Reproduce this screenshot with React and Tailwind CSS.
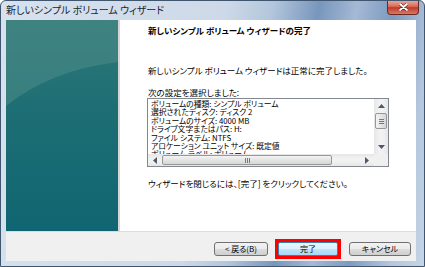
import React from "react";

function Tri({ dir }) {
  const pts = {
    up: "0,4 3.5,0 7,4",
    down: "0,0 3.5,4 7,0",
    left: "4,0 0,3.5 4,7",
    right: "0,0 4,3.5 0,7",
  }[dir];
  const vert = dir === "up" || dir === "down";
  return (
    <svg width={vert ? 7 : 4} height={vert ? 4 : 7} viewBox={vert ? "0 0 7 4" : "0 0 4 7"}>
      <polygon points={pts} fill="#4e5a6c" />
    </svg>
  );
}

const lines = [
  "ボリュームの種類: シンプル ボリューム",
  "選択されたディスク: ディスク 2",
  "ボリュームのサイズ: 4000 MB",
  "ドライブ文字またはパス: H:",
  "ファイル システム: NTFS",
  "アロケーション ユニット サイズ: 既定値",
  "ボリューム ラベル: ボリューム",
];

export default function App() {
  return (
    <div className="w-[425px] h-[267px] overflow-hidden flex flex-col rounded-t-[6px] border border-[#40566f] font-['Noto_Sans_CJK_JP',sans-serif] [font-feature-settings:'palt'] text-black bg-[linear-gradient(100deg,#d7e2ee_0%,#cdd9e8_48%,#b3c6dc_58%,#7896bd_68%,#a4b9d4_76%,#7d9ac1_84%,#b4c7de_93%,#c6d5e6_100%)]">
      {/* title bar */}
      <div className="h-[19px] flex items-start shrink-0">
        <div className="flex-1 pl-[5px] pt-[3px] text-[10px] leading-[12px] text-[#1b2430] whitespace-nowrap">
          新しいシンプル ボリューム ウィザード
        </div>
        <div className="mr-[5px] w-[32px] h-[15px] -mt-[1px] rounded-b-[4px] border border-t-0 border-[#6a2a22] bg-[linear-gradient(#eab0a2_0%,#d86e5c_45%,#c23a2a_55%,#d87a66_100%)] flex items-center justify-center">
          <svg width="9" height="8" viewBox="0 0 9 8">
            <path d="M1 1 L8 7 M8 1 L1 7" stroke="#5a2a24" strokeWidth="3" strokeLinecap="round" />
            <path d="M1 1 L8 7 M8 1 L1 7" stroke="#ffffff" strokeWidth="1.8" strokeLinecap="round" />
          </svg>
        </div>
      </div>

      {/* client */}
      <div className="ml-[5px] mr-[8px] h-[241px] flex flex-col shrink-0 bg-white">
        <div className="h-[211px] flex">
          <div className="w-[112px] relative overflow-hidden bg-[linear-gradient(#2f7878_0%,#1e6f74_40%,#0f6571_100%)]">
            <svg className="absolute inset-0" width="112" height="211" viewBox="0 0 112 211">
              <path d="M0 0 H112 V42 Q45 50 0 86 Z" fill="#4a8a87" opacity="0.6" />
            </svg>
          </div>
          <div className="w-[2px] bg-[#d6d6d6]" />
          <div className="flex-1 pl-[28px] flex flex-col">
            <div className="mt-[4px] text-[8.5px] leading-[12px] font-bold whitespace-nowrap">
              新しいシンプル ボリューム ウィザードの完了
            </div>
            <div className="mt-[28px] text-[8.5px] leading-[12px] whitespace-nowrap">
              新しいシンプル ボリューム ウィザードは正常に完了しました。
            </div>
            <div className="mt-[10px] text-[8.5px] leading-[12px] whitespace-nowrap">
              次の設定を選択しました:
            </div>
            <div className="-ml-[1px] w-[242px] h-[69px] border border-[#828790] bg-white grid grid-cols-[1fr_14px] grid-rows-[1fr_12px]">
              <div className="overflow-hidden pl-[3px] pt-[1px]">
                {lines.map((l) => (
                  <div key={l} className="text-[7.8px] leading-[8.4px] h-[8.4px] whitespace-nowrap">
                    {l}
                  </div>
                ))}
              </div>
              <div className="flex flex-col bg-[linear-gradient(to_right,#e6e6e6,#f2f2f2_40%,#f2f2f2_60%,#e6e6e6)]">
                <div className="h-[14px] flex items-center justify-center">
                  <Tri dir="up" />
                </div>
                <div className="h-[16px] mx-[1px] rounded-[2px] border border-[#979797] bg-[linear-gradient(to_right,#f4f4f4,#e4e4e4_50%,#d6d6d6)] flex flex-col items-center justify-center gap-[1px]">
                  <div className="w-[5px] h-[1px] bg-[#7a7a7a]" />
                  <div className="w-[5px] h-[1px] bg-[#7a7a7a]" />
                  <div className="w-[5px] h-[1px] bg-[#7a7a7a]" />
                </div>
                <div className="flex-1" />
                <div className="h-[14px] flex items-center justify-center">
                  <Tri dir="down" />
                </div>
              </div>
              <div className="flex bg-[linear-gradient(#e6e6e6,#f2f2f2_40%,#f2f2f2_60%,#e6e6e6)]">
                <div className="w-[14px] flex items-center justify-center">
                  <Tri dir="left" />
                </div>
                <div className="w-[170px] my-[1px] rounded-[2px] border border-[#979797] bg-[linear-gradient(#f4f4f4,#e4e4e4_50%,#d6d6d6)] flex items-center justify-center gap-[1px]">
                  <div className="w-[1px] h-[5px] bg-[#7a7a7a]" />
                  <div className="w-[1px] h-[5px] bg-[#7a7a7a]" />
                  <div className="w-[1px] h-[5px] bg-[#7a7a7a]" />
                </div>
                <div className="flex-1" />
                <div className="w-[14px] flex items-center justify-center">
                  <Tri dir="right" />
                </div>
              </div>
              <div className="bg-[#f0f0f0]" />
            </div>
            <div className="mt-[10px] text-[8.5px] leading-[12px] whitespace-nowrap">
              ウィザードを閉じるには、[完了] をクリックしてください。
            </div>
          </div>
        </div>

        <div className="h-[30px] border-t border-[#dcdcdc] bg-[#f0f0f0] flex items-center justify-end pt-[4px] pr-[5px]">
          <div className="w-[54px] h-[14px] rounded-[3px] border border-[#707070] bg-[linear-gradient(#f2f2f2_0%,#ebebeb_50%,#dddddd_50%,#cfcfcf_100%)] flex items-center justify-center text-[8px] leading-none whitespace-nowrap">
            &lt; 戻る(B)
          </div>
          <div className="ml-[7px] border-[3px] border-[#ff0000] bg-[#ff0000]">
            <div className="w-[60px] h-[14px] rounded-[2px] border border-[#3c7fb1] bg-[linear-gradient(#eaf6fd_0%,#d9f0fc_50%,#bee6fd_50%,#a7d9f5_100%)] flex items-center justify-center text-[8px] leading-none">
              完了
            </div>
          </div>
          <div className="ml-[8px] w-[62px] h-[14px] rounded-[3px] border border-[#707070] bg-[linear-gradient(#f2f2f2_0%,#ebebeb_50%,#dddddd_50%,#cfcfcf_100%)] flex items-center justify-center text-[8px] leading-none">
            キャンセル
          </div>
        </div>
      </div>
    </div>
  );
}
